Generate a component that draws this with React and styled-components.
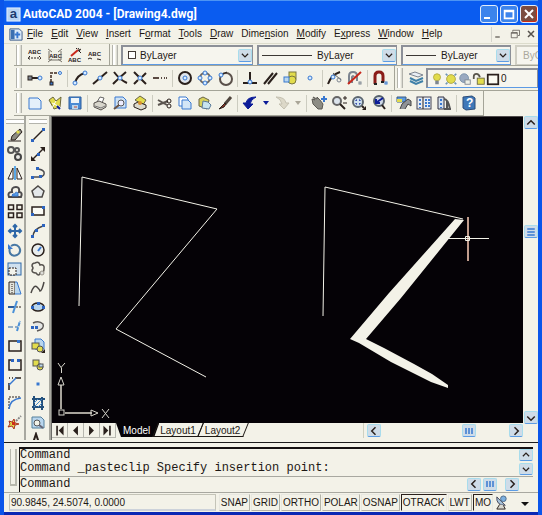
import React, { useState } from "react";
import styled, { createGlobalStyle } from "styled-components";

const GlobalStyle = createGlobalStyle`
  * {
    box-sizing: border-box;
  }
  body {
    margin: 0;
    background: #f3f2e8;
    font-family: "Liberation Sans", Arial, sans-serif;
    font-size: 10px;
    color: #1d1814;
  }
  button, select, input {
    font: inherit;
    color: inherit;
  }
  button {
    padding: 0;
    border: none;
    background: none;
  }
`;

const ink = "#2a201c";
const blue = "#3878d0";
const sky = "#b9d6ee";
const navy = "#0c1c98";
const yellow = "#e2dc4c";
const steel = "#7d8590";

const node = (x, y, r = 1.5) => (
  <circle cx={x} cy={y} r={r} fill="#d8ecff" stroke={blue} />
);
const dot = (x, y) => <rect x={x} y={y} width="3" height="3" fill="#2c64c0" stroke="none" />;

const icons = {
  // text and spelling
  textArrow: (
    <>
      <text x="1" y="7" fontSize="6" fontWeight="bold" stroke="none" fill={ink}>ABC</text>
      <path d="M1 11h13M3 9l-2 2 2 2M12 9l2 2-2 2" strokeDasharray="2 1" />
    </>
  ),
  textCross: (
    <>
      <text x="2" y="11" fontSize="6" fontWeight="bold" stroke="none" fill={ink}>ABC</text>
      <path d="M1 2l4 3M15 2l-4 3M1 15l4-3M15 15l-4-3M2 4v9h12V4" stroke="#77726a" />
    </>
  ),
  textWand: (
    <>
      <path d="M4 9l7-6" stroke="#c8281c" strokeWidth="2" />
      <path d="M11 1l2 3M14 2l-3 2M14 6l-2-2M9 1l1 1" />
      <text x="1" y="15" fontSize="6" fontWeight="bold" stroke="none" fill={ink}>ABC</text>
    </>
  ),
  textArc: (
    <>
      <text x="1" y="9" fontSize="6" fontWeight="bold" stroke="none" fill={ink}>ABC</text>
      <path d="M1 12q2-2 4 0M10 12q2 0 4 1" />
    </>
  ),
  // object snap
  track: (
    <>
      <path d="M2 8h10" strokeWidth="2" />
      <rect x="1" y="6" width="4" height="4" fill={steel} />
      {node(13, 8, 2)}
    </>
  ),
  from: (
    <>
      <path d="M4 12V3h8" strokeDasharray="3 1" strokeWidth="2" stroke="#6a5a50" />
      <rect x="3" y="12" width="3" height="3" fill={blue} stroke={ink} />
      {node(13, 3)}
    </>
  ),
  endpoint: (
    <>
      <path d="M3 13Q5 5 13 3" strokeWidth="2" />
      {node(3, 13, 2)}
      {node(13, 3, 2)}
    </>
  ),
  midpoint: (
    <>
      <path d="M1 14L15 2" strokeWidth="2" />
      {node(8, 8, 2)}
    </>
  ),
  intersection: (
    <>
      <path d="M2 2q6 8 13 11M1 14q5-5 13-12" strokeWidth="2" />
      {node(8, 8, 2)}
    </>
  ),
  apparent: (
    <>
      <path d="M2 2l12 12M14 3L10 7M6 10l-4 4" strokeWidth="2" />
      {node(8, 8, 2)}
    </>
  ),
  extension: <path d="M1 8h6M9 8h1M12 8h1M14 8h1" strokeWidth="2" stroke="#5a4a42" />,
  center: (
    <>
      <circle cx="8" cy="8" r="6" strokeWidth="2" fill="#dfe5ec" />
      {node(8, 8, 2)}
    </>
  ),
  quadrant: (
    <>
      <circle cx="8" cy="8" r="5" strokeWidth="2" stroke="#6a6460" />
      {node(8, 3, 2)}
      {node(8, 13, 2)}
      {node(3, 8, 2)}
      {node(13, 8, 2)}
    </>
  ),
  tangent: (
    <>
      <circle cx="9" cy="9" r="6" strokeWidth="2" stroke="#5a504a" />
      <path d="M2 6l8-4" />
      {node(4, 5, 2)}
    </>
  ),
  perpendicular: (
    <>
      <path d="M8 2v9M1 13h14" strokeWidth="2" />
      {node(8, 12, 2)}
    </>
  ),
  parallel: <path d="M2 14L11 3M6 14L15 3" strokeWidth="2" />,
  insertPoint: (
    <>
      <rect x="7" y="2" width="7" height="7" fill={yellow} stroke="#7a7640" />
      <circle cx="10" cy="10" r="4" fill={yellow} stroke="#7a7640" />
      <rect x="2" y="7" width="5" height="5" fill={sky} stroke={blue} />
    </>
  ),
  nodePoint: node(8, 8, 2),
  nearest: (
    <>
      <path d="M1 14Q4 5 13 2" strokeWidth="2" />
      <path d="M6 3l8 7" stroke="#555" />
      {node(6, 7, 2)}
      <circle cx="12" cy="10" r="2" stroke={steel} />
    </>
  ),
  snapNone: (
    <>
      <path d="M2 14V6q0-4 4-4t4 4v5M5 13V7q1-2 2 0" stroke={steel} strokeWidth="2" />
      <path d="M1 14L14 2" stroke="#c8281c" strokeWidth="2" />
      <rect x="12" y="12" width="2" height="2" stroke={steel} />
    </>
  ),
  snapSettings: (
    <>
      <path d="M3 14V6q0-4 4-4t4 4v6" stroke="#8a1c18" strokeWidth="3" />
      <path d="M2 14h3M9 12h3" stroke="#222" strokeWidth="2" />
      <rect x="13" y="12" width="2" height="2" stroke={blue} />
    </>
  ),
  layers: (
    <>
      <path d="M1 4l6-2 8 3-5 2z" fill="#e8eef4" stroke={steel} />
      <path d="M2 8l6 3 7-3M2 11l6 3 7-3" stroke="#3f80a8" strokeWidth="2" />
    </>
  ),
  bulb: (
    <>
      <circle cx="8" cy="6" r="4" fill={yellow} stroke="#b0a840" />
      <path d="M6 11h4M6 13h4" strokeWidth="2" stroke={steel} />
    </>
  ),
  sun: (
    <>
      <circle cx="8" cy="8" r="5" fill={yellow} stroke="#a8a040" />
      <path d="M2 2l2 2M14 2l-2 2M2 14l2-2M14 14l-2-2" stroke="#6c94b4" strokeWidth="2" />
    </>
  ),
  freeze: (
    <>
      <circle cx="7" cy="7" r="5" fill="#9aa9c0" stroke="#7890a8" />
      <rect x="8" y="9" width="6" height="5" fill="#eef0e8" stroke={steel} />
    </>
  ),
  lock: (
    <>
      <path d="M2 8V5q0-3 3-3t4 4" strokeWidth="2" stroke="#5a564c" />
      <rect x="6" y="7" width="8" height="7" fill={yellow} stroke="#6a6640" />
    </>
  ),
  swatch: <rect x="2" y="3" width="12" height="11" fill="#fbfaf2" strokeWidth="2" />,
  smallSwatch: <rect x="4" y="4" width="8" height="8" fill="#fff" strokeWidth="1" />,
  // standard
  newFile: <path d="M2 3h9l3 3v8H2z" fill="#e4f0fa" stroke={blue} />,
  open: (
    <>
      <path d="M2 5l4-3 3 4 5-4-1 10-6 2z" fill={yellow} stroke="#6a6640" />
      <path d="M5 8l8 4M9 6l-4 7" stroke="#fff" />
      <path d="M10 11l3 3" stroke={navy} strokeWidth="2" />
    </>
  ),
  save: (
    <>
      <path d="M2 2h12v12H2z" fill="#4a8ad4" stroke="#2c5c9c" />
      <path d="M4 3h8v5H4z" fill="#eef4f8" stroke="none" />
      <path d="M5 10h6v4H5z" fill={sky} stroke="none" />
      <path d="M7 12h3" stroke="#c84830" />
    </>
  ),
  print: (
    <>
      <path d="M5 7l3-5 4 1-2 5" fill="#fff" stroke="#666" />
      <path d="M2 8l5-2 7 3v3l-5 3-7-3z" fill="#d8d6cc" stroke="#55504c" />
      <path d="M3 11l6 2 4-2" stroke="#777" />
    </>
  ),
  preview: (
    <>
      <path d="M3 2h8l3 3v8H3z" fill="#cfe2f4" stroke={blue} />
      <circle cx="9" cy="8" r="3" fill="#eef" stroke="#555" />
      <path d="M7 10l-5 4" strokeWidth="2" stroke="#6a5446" />
    </>
  ),
  publish: (
    <>
      <path d="M3 5l5-4 6 4-3 5z" fill={yellow} stroke="#6a6448" />
      <path d="M2 9l4-2 8 3v3l-5 2-7-3z" fill="#dcdacc" />
      <circle cx="8" cy="8" r="2" fill="#d89030" stroke="none" />
    </>
  ),
  cut: (
    <>
      <path d="M1 5l9 5M1 10l10-4" strokeWidth="2" stroke="#5c5650" />
      <circle cx="12" cy="6" r="2" />
      <circle cx="12" cy="11" r="2" />
    </>
  ),
  copyClip: (
    <>
      <path d="M2 2h7l2 2v7H2z" fill="#fff" stroke={blue} />
      <path d="M5 5h6l3 3v6H5z" fill="#d4e6f6" stroke={blue} />
    </>
  ),
  paste: (
    <>
      <path d="M2 4l4-2 6 3-2 9-8-3z" fill="#d8d25c" stroke="#6a6448" />
      <path d="M6 6l5 1 3 3-2 4-7-1z" fill="#c8e4f0" stroke="#5a7a98" />
    </>
  ),
  match: (
    <>
      <path d="M14 2L8 9" strokeWidth="3" stroke="#50463e" />
      <path d="M8 8l-6 6 5-2 2-3z" fill="#8c3424" stroke={ink} />
    </>
  ),
  undo: (
    <path d="M1 8h3q1-6 10-6-5 2-6 7h3l-5 5z" fill={navy} stroke={navy} />
  ),
  redo: (
    <path d="M15 8h-3Q11 2 2 2q5 2 6 7H5l5 5z" fill="#dcd8c8" stroke="#c4c0b0" />
  ),
  caret: <path d="M5 6h6L8 10z" fill={navy} stroke="none" />,
  caretGray: <path d="M5 6h6L8 10z" fill="#aaa698" stroke="none" />,
  pan: (
    <>
      <path d="M1 4l3 1-2-3 4 2V2l3 3 3 4-1 5H7L2 9z" fill="#8c8c84" stroke="#5c5a54" />
      <path d="M13 1v6M10 4h6" stroke={blue} strokeWidth="2" />
    </>
  ),
  zoomLive: (
    <>
      <circle cx="6" cy="6" r="4" fill="#dce4ec" stroke="#666" strokeWidth="2" />
      <path d="M9 9l5 5" strokeWidth="2" />
      <path d="M12 3h4M14 1v4M12 8h4" />
    </>
  ),
  zoomWindow: (
    <>
      <circle cx="7" cy="7" r="5" fill="#cfe2f0" stroke="#5c6670" strokeWidth="2" />
      <path d="M5 6V5h1M8 5h1v1M9 8v1H8M6 9H5V8" stroke={navy} />
      <path d="M11 11l2 2" strokeWidth="2" />
      <path d="M15 11v4h-4z" fill={ink} stroke="none" />
    </>
  ),
  zoomPrev: (
    <>
      <circle cx="8" cy="6" r="5" fill="#cfd8e6" stroke="#55606c" strokeWidth="2" />
      <path d="M12 3L6 7M5 4v4h4" stroke={navy} strokeWidth="2" />
      <path d="M11 10l3 4" strokeWidth="2" />
    </>
  ),
  properties: (
    <>
      <path d="M1 2h9v5H1z" fill="#5a9ae0" stroke="#3a5a80" />
      <path d="M1 4h5v3H1z" fill={yellow} stroke="none" />
      <path d="M4 14l2-5 6-5 3 2v5l-3-2-3 5" fill="#8f9296" stroke="#444" />
    </>
  ),
  designCenter: (
    <>
      <rect x="1" y="2" width="14" height="12" fill="#e6ecf4" stroke="#445" />
      <path d="M7 2v12" />
      <path d="M4 4v2M4 8v2M4 12v1M9 5h2M12 5h2M9 8h2M12 8h2M9 11h2M12 11h2" stroke={blue} strokeWidth="2" />
    </>
  ),
  toolPalettes: (
    <>
      <path d="M2 2h6v12H2z" fill="#d4e0ee" stroke="#334" />
      <path d="M5 4v2M5 8v2M5 12v1" stroke={blue} strokeWidth="2" />
      <path d="M8 4q4 0 6 10M11 6v8M8 14h7" stroke="#555" strokeWidth="2" />
    </>
  ),
  help: (
    <>
      <path d="M2 2l9-1 3 2v11l-9 1-3-2z" fill="#3f78b8" stroke="#2c4c78" />
      <text x="5" y="12" fontSize="12" fontWeight="bold" fill="#fff" stroke="none">?</text>
    </>
  ),
  // modify
  erase: (
    <>
      <path d="M13 2l2 3-7 8H4l1-4z" fill="#8c8a80" />
      <path d="M12 4l-2 2" stroke={yellow} strokeWidth="3" />
      <path d="M1 14h13" />
    </>
  ),
  copy: (
    <>
      <circle cx="4" cy="4" r="3" strokeWidth="2" stroke="#555" />
      <circle cx="10" cy="4" r="2" strokeWidth="2" stroke="#555" />
      <circle cx="11" cy="11" r="3" strokeWidth="2" stroke="#444" fill="#e8e8e4" />
    </>
  ),
  mirror: (
    <>
      <path d="M6 3v11H1zM10 3v11h5z" fill="#fff" />
      <path d="M8 1v14" stroke="#5aa8e8" strokeWidth="2" />
    </>
  ),
  offset: (
    <>
      <path d="M2 13q-2-5 3-5-1-5 4-5 4 0 3 5 4 0 2 5z" stroke="#4c4a4c" strokeWidth="2" />
      <path d="M5 12q0-3 3-2 0-3 3-1v3z" fill="#5aa0e8" stroke={blue} />
    </>
  ),
  array: (
    <g strokeWidth="1.5">
      <rect x="1.500" y="2" width="5" height="4.500" />
      <rect x="10" y="2" width="5" height="4.500" />
      <rect x="1.500" y="10" width="5" height="4.500" />
      <rect x="10" y="10" width="5" height="4.500" />
    </g>
  ),
  move: (
    <path
      d="M8 2v12M2 8h12M6 4l2-2 2 2M6 12l2 2 2-2M4 6L2 8l2 2M12 6l2 2-2 2"
      stroke="#2f68a8"
      strokeWidth="2"
    />
  ),
  rotate: (
    <>
      <path d="M4 4q5-3 8 1 3 5-2 8-5 2-7-2-1-3 0-5" stroke="#4878a4" strokeWidth="2" />
      <path d="M1 2v5h5z" fill={blue} stroke="none" />
    </>
  ),
  scale: (
    <>
      <rect x="1" y="2" width="13" height="12" fill="#cfe0ee" stroke="#2f68a8" />
      <path d="M2 7h7v7H2z" fill="#f4f4ec" strokeDasharray="2 1" />
    </>
  ),
  stretch: (
    <>
      <path d="M2 2h6v12H2z" fill="#e4e4dc" />
      <path d="M8 2h2l4 12H8" fill={sky} stroke={blue} />
      <path d="M5 4v9" strokeDasharray="1 1" />
    </>
  ),
  trim: (
    <>
      <path d="M1 8h7" strokeWidth="2" stroke="#2c5c9c" />
      <path d="M9 8h6" strokeDasharray="2 1" />
      <path d="M6 14L10 2" stroke="#4a90d8" strokeWidth="2" />
    </>
  ),
  extend: (
    <>
      <path d="M1 9h5M8 9h3" stroke="#2f68a8" />
      <path d="M10 13l3-10" stroke="#4a90d8" strokeDasharray="4 1" strokeWidth="2" />
    </>
  ),
  breakPoint: (
    <>
      <path d="M2 3v10h12V3H2z" strokeWidth="1.5" />
      <rect x="10" y="2" width="3" height="3" fill={blue} stroke="none" />
    </>
  ),
  breakGap: (
    <>
      <path d="M4 3H2v10h12V3h-2" strokeWidth="1.5" />
      {dot(4, 2)}
      {dot(10, 2)}
    </>
  ),
  chamfer: (
    <>
      <path d="M2 14V7M2 2h1M5 2h1M8 2h6" strokeWidth="1.5" />
      <path d="M2 9l7-7" stroke={blue} strokeWidth="1.5" />
    </>
  ),
  fillet: (
    <>
      <path d="M2 14V2h12" strokeDasharray="2 1" />
      <path d="M2 14Q3 4 14 3" stroke={blue} strokeWidth="1.5" />
    </>
  ),
  explode: (
    <>
      <path d="M2 7l3 1 2-3 1 4 4 1-4 1-1 4-2-3-4 1 2-3z" fill={yellow} stroke="#a83020" />
      <path d="M9 7l5-5" stroke="#888" strokeWidth="2" strokeDasharray="2 1" />
      <rect x="5" y="8" width="3" height="3" fill="#d02c18" stroke="none" />
    </>
  ),
  // draw
  line: (
    <>
      <path d="M3 13L13 3" strokeWidth="1.5" />
      {dot(1, 12)}
      {dot(12, 1)}
    </>
  ),
  xline: (
    <>
      <path d="M2 14L14 2" strokeWidth="1.5" />
      <path d="M1 15v-5l5 5zM15 1v5l-5-5z" fill={ink} stroke="none" />
      {dot(7, 7)}
    </>
  ),
  pline: (
    <>
      <path d="M3 12h7q5-1 4-5-2-3-7-3" strokeWidth="1.5" stroke="#4c4c50" />
      {dot(1, 11)}
      {dot(6, 2)}
      {dot(9, 10)}
    </>
  ),
  polygon: <path d="M8 2l6 5-2 6H4L2 7z" fill="#e4e8ea" strokeWidth="1.5" stroke="#4c4846" />,
  rectangle: (
    <>
      <rect x="2" y="4" width="12" height="8" fill="#fafaf4" strokeWidth="1.5" />
      {dot(1, 10)}
      {dot(12, 3)}
    </>
  ),
  arc: (
    <>
      <path d="M3 14Q3 6 13 3" strokeWidth="1.5" stroke="#444" />
      {dot(1, 12)}
      {dot(5, 6)}
      {dot(12, 1)}
    </>
  ),
  circle: (
    <>
      <circle cx="8" cy="8" r="6" fill="#e8ecec" strokeWidth="1.5" />
      <path d="M8 9l3-4" stroke={blue} strokeWidth="2" />
    </>
  ),
  cloud: (
    <>
      <path
        d="M5 2q4-2 5 2 5-1 4 4 0 5-4 4-1 4-4 0-4 0-4-3 2-2 0-4 0-3 3-3z"
        fill="#f3f2e8"
        strokeWidth="1.5"
        stroke="#56524e"
      />
      <circle cx="12" cy="12" r="2" fill="#dcdcd8" stroke="#99958c" />
    </>
  ),
  spline: <path d="M1 13q3-9 6-6t3 4q2 0 4-9" strokeWidth="1.5" stroke="#4a4644" />,
  ellipse: (
    <>
      <ellipse cx="8" cy="8" rx="6" ry="4" fill={sky} strokeWidth="1.5" />
      {dot(1, 7)}
      {dot(12, 7)}
      {dot(7, 3)}
    </>
  ),
  ellipseArc: (
    <>
      <path d="M3 5q6-3 10 1 2 5-6 7" fill="#e4e6e4" strokeWidth="1.5" stroke="#5c5856" />
      {dot(1, 8)}
      {dot(5, 8)}
    </>
  ),
  insertBlock: (
    <>
      <path d="M5 1h6l3 3v7H5z" fill={sky} stroke={blue} />
      <rect x="2" y="5" width="7" height="6" fill={yellow} stroke="#555" />
      <circle cx="10" cy="11" r="3" fill={yellow} stroke="#555" />
      <path d="M15 11v4h-4z" fill={ink} stroke="none" />
    </>
  ),
  makeBlock: (
    <>
      <rect x="3" y="3" width="6" height="6" fill={yellow} stroke="#555" />
      <circle cx="10" cy="10" r="3" fill={yellow} stroke="#555" />
      <rect x="9" y="7" width="4" height="3" fill={sky} stroke="#555" />
    </>
  ),
  point: <rect x="7" y="7" width="2" height="2" fill={blue} stroke={blue} />,
  hatch: (
    <>
      <path d="M2 4h13M2 12h12M4 1v14M12 2v13" stroke="#23507c" strokeWidth="2" />
      <path d="M4 8l4-4M4 12l8-8M8 12l4-4" stroke="#4a8ac8" />
    </>
  ),
  region: (
    <>
      <path d="M2 3h9l3 3v8H2z" fill={sky} stroke="#55809c" />
      <circle cx="7" cy="9" r="3" fill="#f3f2e8" stroke="#555" />
      <path d="M9 11l4 3" strokeWidth="2" stroke="#667" />
    </>
  ),
  mtext: <path d="M4 14L8 2l4 12M5 10h6" strokeWidth="2" />,
  // chrome
  app: (
    <>
      <rect x="1" y="1" width="14" height="14" fill="#b8d4f4" stroke="#e8f2ff" />
      <text x="4" y="12" fontSize="14" fontWeight="bold" fill="#1c3c70" stroke="none">a</text>
    </>
  ),
  drawing: (
    <>
      <path d="M2 2h10l3 3v9H2z" fill="#dcebf8" stroke="#3a5a88" />
      <path d="M3 3h4v10H3z" fill="#3c70b0" stroke="none" />
      <path d="M10 5v7M7 8h6" stroke={blue} strokeWidth="2" />
    </>
  ),
  dish: (
    <>
      <path d="M3 2q-1 9 9 9z" fill="#a8c4dc" stroke="#445" />
      <circle cx="10" cy="4" r="3" fill="#7cb0e0" stroke="#4a6888" />
      <path d="M6 10l-3 5h9l-2-4" fill="#d8d8d0" />
    </>
  ),
  minimize: <path d="M3 12h6" strokeWidth="2" />,
  restore: <path d="M5 5V3h9v7h-2M3 6h8v7H3zM3 7h8" />,
  maximize: <path d="M3 4h10v9H3zM3 5h10" strokeWidth="2" />,
  close: <path d="M4 4l8 8M12 4l-8 8" strokeWidth="2" />,
  left: <path d="M10 3L5 8l5 5" strokeWidth="2" />,
  right: <path d="M6 3l5 5-5 5" strokeWidth="2" />,
  up: <path d="M3 10l5-5 5 5" strokeWidth="2" />,
  down: <path d="M3 6l5 5 5-5" strokeWidth="2" />,
  first: <path d="M4 2v12h2V2zM13 2v12L7 8z" fill={ink} stroke="none" />,
  prev: <path d="M11 2v12L5 8z" fill={ink} stroke="none" />,
  next: <path d="M5 2v12l6-6z" fill={ink} stroke="none" />,
  last: <path d="M3 2v12l6-6zM10 2v12h2V2z" fill={ink} stroke="none" />,
  menuDown: <path d="M4 7h8l-4 4z" fill="#111" stroke="none" />,
  thumbH: <path d="M4 4v8M8 4v8M12 4v8" stroke={blue} strokeWidth="2" />,
  thumbV: <path d="M3 4h10M3 8h10M3 12h10" stroke={blue} strokeWidth="2" />,
};

const Svg = styled.svg`
  display: block;
  flex: none;
  overflow: visible;
`;

const Icon = ({ name, size = 16, color = ink }) => (
  <Svg width={size} height={size} viewBox="0 0 16 16" fill="none" stroke={color} aria-hidden="true">
    {icons[name]}
  </Svg>
);

const Window = styled.div`
  display: flex;
  flex-direction: column;
  width: 100%;
  min-height: 100vh;
  overflow: hidden;
  background: #f3f2e8;
  border: solid #0a55ea;
  border-width: 0 4px 0 4px;
`;

const TitleBar = styled.header`
  display: flex;
  align-items: center;
  gap: 2px;
  height: 25px;
  margin: 0 -4px;
  padding: 2px 4px 0 6px;
  background: #0a5cf0;
  border-top: 1px solid #4c94f4;
  border-radius: 4px 4px 0 0;
  h1 {
    flex: 1;
    margin: 0;
    font-family: Roboto, "Liberation Sans", sans-serif;
    font-size: 12px;
    line-height: 18px;
    color: #fff;
    white-space: nowrap;
  }
`;

const CaptionButton = styled.button`
  display: flex;
  align-items: center;
  justify-content: center;
  width: 18px;
  height: 18px;
  border: 1px solid #e4eefc;
  border-radius: 3px;
  background: ${(props) => (props.$close ? "#7c4c40" : "#3c84ec")};
  box-shadow: ${(props) => (props.$close ? "inset -1px -1px #cc2c14" : "none")};
`;

const MenuBar = styled.nav`
  display: flex;
  align-items: center;
  height: 19px;
  padding-left: 4px;
  border-bottom: 1px solid #dcdccc;
`;

const MenuItem = styled.button`
  padding: 0 4px;
  line-height: 16px;
  white-space: nowrap;
  u {
    text-underline-offset: 1px;
  }
`;

const MdiButtons = styled.div`
  display: flex;
  gap: 2px;
  margin-left: auto;
  border-left: 1px solid #d4d4cc;
`;

const MdiButton = styled.button`
  display: flex;
  align-items: center;
  justify-content: center;
  width: 14px;
  height: 15px;
`;

const ToolRow = styled.div`
  display: flex;
  overflow: hidden;
  height: ${(props) => (props.$short ? 22 : 25)}px;
  padding-left: 10px;
`;

const Toolbar = styled.div`
  display: flex;
  align-items: center;
  flex: ${(props) => (props.$grow ? "1 0 auto" : "none")};
  padding-right: ${(props) => (props.$grow ? 0 : 4)}px;
  border: solid #a4a498;
  border-width: 0 ${(props) => (props.$grow ? 0 : 1)}px 1px 0;
`;

const Grip = styled.div`
  flex: none;
  width: 6px;
  height: 20px;
  margin: 0 3px 0 2px;
  border: solid #b4b4ac;
  border-width: 0 1px;
  box-shadow: inset 2px 0 #fff, inset -1px 0 #dcdcd4;
`;

const ToolButton = styled.button`
  display: flex;
  align-items: center;
  justify-content: center;
  flex: none;
  width: ${(props) => (props.$narrow ? 12 : 20)}px;
  height: 20px;
`;

const Separator = styled.div`
  flex: none;
  width: 1px;
  height: 17px;
  margin: 0 2px;
  background: #ccccc0;
`;

const Combo = styled.label`
  display: flex;
  align-items: center;
  flex: ${(props) => (props.$width ? "none" : "1 0 112px")};
  width: ${(props) => props.$width || 112}px;
  height: 20px;
  padding-left: 2px;
  margin-right: ${(props) => (props.$width ? 4 : 0)}px;
  background: #f6f5ee;
  border: solid #8c9098;
  border-width: 2px 1px 1px 2px;
  border-color: ${(props) => (props.$disabled ? "#d0cfc4" : "#8c9098")};
  border-bottom-color: ${(props) => (props.$disabled ? "#d0cfc4" : "#5c9ae4")};
  color: ${(props) => (props.$disabled ? "#aaa89c" : "inherit")};
  select {
    flex: 1;
    min-width: 0;
    height: 16px;
    padding: 0 0 0 ${(props) => (props.$disabled ? 4 : 1)}px;
    border: none;
    outline: none;
    background: none;
    appearance: none;
    opacity: 1;
  }
`;

const LineSample = styled.span`
  flex: none;
  width: ${(props) => props.$length}px;
  height: 1px;
  margin: 0 4px 0 1px;
  background: #3c3834;
`;

const ScrollButton = styled.button`
  display: flex;
  align-items: center;
  justify-content: center;
  flex: none;
  width: 14px;
  height: 13px;
  border: 1px solid #a8dcec;
  border-bottom-color: #5c9ce4;
  border-radius: 2px;
  background: #cfdce8;
`;

const Workspace = styled.main`
  display: flex;
  flex: 1;
  min-height: 240px;
  padding-left: 1px;
`;

const SideToolbar = styled.div`
  display: flex;
  flex-direction: column;
  align-items: center;
  width: ${(props) => props.$width}px;
  padding-top: 3px;
  overflow: hidden;
  border-right: 2px solid #a8a8a0;
`;

const SideGrip = styled.div`
  flex: none;
  width: 18px;
  height: 5px;
  margin-bottom: 1px;
  border: solid #b4b4ac;
  border-width: 1px 0;
  background: #fff;
`;

const SideButtons = styled.div`
  display: flex;
  flex-direction: column;
  flex: 1;
  button {
    flex: 1;
    min-height: 0;
  }
`;

const Cutoff = styled.div`
  height: 8px;
  overflow: hidden;
`;

const Document = styled.section`
  display: flex;
  flex-direction: column;
  flex: 1;
  min-width: 0;
  border-left: 1px solid #6c6c68;
`;

const Drawing = styled.svg`
  display: block;
  flex: 1;
  width: 100%;
  min-height: 0;
  background: #050206;
  border-top: 1px solid #504c4c;
`;

const DocumentFooter = styled.div`
  display: flex;
  align-items: flex-start;
  height: 17px;
`;

const SheetNav = styled.div`
  display: flex;
  button {
    display: flex;
    align-items: center;
    justify-content: center;
    width: 16px;
    height: 15px;
    border: solid #b8b8b0;
    border-width: 0 1px 1px 0;
  }
`;

const Tabs = styled.div`
  display: flex;
  margin-left: 2px;
`;

const Tab = styled.button`
  position: relative;
  z-index: 0;
  height: 14px;
  padding: 0 3px;
  line-height: 13px;
  color: ${(props) => (props.$active ? "#fff" : "inherit")};
  &::before {
    content: "";
    position: absolute;
    z-index: -1;
    ${(props) =>
      props.$active
        ? `
      inset: 0 -5px 0 -2px;
      background: #050206;
      clip-path: polygon(0 0, 100% 0, calc(100% - 5px) 100%, 5px 100%);
    `
        : `
      inset: 0 -2px;
      border: solid #1d1814;
      border-width: 0 1px 1px 1px;
      transform: skewX(-22deg);
    `}
  }
  &:first-child {
    padding: 0 4px 0 5px;
  }
  & + & {
    margin-left: 3px;
  }
`;

const ScrollX = styled.div`
  display: flex;
  align-items: center;
  justify-content: space-between;
  width: 160px;
  height: 15px;
  margin-left: auto;
  padding-left: 3px;
  border-left: 1px solid #d0d0c0;
`;

const ScrollY = styled.div`
  display: flex;
  flex-direction: column;
  align-items: center;
  width: 15px;
  padding-bottom: 16px;
`;

const Spacer = styled.div`
  flex: ${(props) => props.$grow || 1};
`;

const CommandPanel = styled.section`
  display: flex;
  height: 50px;
  padding: 4px 5px 0 6px;
  margin-top: 2px;
  border-top: 1px solid #1c1c1c;
`;

const CommandGrip = styled.div`
  width: 7px;
  margin: 2px 2px 6px 0;
  border: solid #b8b8ac;
  border-width: 0 2px 2px 1px;
`;

const Console = styled.div`
  display: flex;
  flex-direction: column;
  flex: 1;
  min-width: 0;
  border: solid #141010;
  border-width: 2px 0 0 1px;
  font-family: "Liberation Mono", monospace;
  font-size: 12px;
`;

const History = styled.div`
  display: flex;
  height: 28px;
  border-bottom: 1px solid #a8a8a0;
`;

const Log = styled.div`
  display: flex;
  flex-direction: column;
  flex: 1;
  line-height: 13px;
  white-space: pre;
`;

const LogScroll = styled.div`
  display: flex;
  flex-direction: column;
  justify-content: space-between;
  padding-bottom: 1px;
  button {
    height: 12px;
  }
`;

const Prompt = styled.label`
  display: flex;
  align-items: center;
  gap: 2px;
  height: 14px;
  padding-right: 14px;
  input {
    flex: 1;
    min-width: 0;
    height: 14px;
    padding: 0 6px;
    border: none;
    outline: none;
    background: none;
  }
`;

const StatusBar = styled.footer`
  display: flex;
  align-items: center;
  gap: 1px;
  height: 23px;
  margin: 0 -4px;
  padding: 1px 0 0 5px;
  overflow: hidden;
  background: #f3f2e8;
  border: solid #0a55ea;
  border-width: 0 4px 3px;
  border-bottom-color: #0a28b4;
  box-shadow: inset 0 1px #a8a8a0;
`;

const Coordinates = styled.output`
  flex: 1;
  height: 17px;
  margin-right: 2px;
  padding-left: 1px;
  line-height: 15px;
  white-space: nowrap;
  border: 1px solid #c4c4b8;
  border-bottom: 2px solid #ccd2da;
`;

const Toggle = styled.button`
  flex: none;
  height: 17px;
  padding: 0 1px;
  line-height: 15px;
  border: 1px solid;
  border-color: ${(props) =>
    props.$on ? "#2a201c #e8e8e0 #e8e8e0 #2a201c" : "#e8e8e0 #b4b4a8 #b4b4a8 #e8e8e0"};
`;

const StatusTray = styled.div`
  display: flex;
  align-items: center;
  gap: 6px;
  width: 44px;
`;

const menus = [
  ["", "F", "ile"],
  ["", "E", "dit"],
  ["", "V", "iew"],
  ["", "I", "nsert"],
  ["F", "o", "rmat"],
  ["", "T", "ools"],
  ["", "D", "raw"],
  ["Dime", "n", "sion"],
  ["", "M", "odify"],
  ["E", "x", "press"],
  ["", "W", "indow"],
  ["", "H", "elp"],
];

const textTools = ["textArrow", "textCross", "textWand", "textArc"];

const snapTools = [
  "track", "from", "|",
  "endpoint", "midpoint", "intersection", "apparent", "extension", "|",
  "center", "quadrant", "tangent", "|",
  "perpendicular", "parallel", "insertPoint", "nodePoint", "|",
  "nearest", "snapNone", "|",
  "snapSettings",
];

const standardTools = [
  "newFile", "open", "save", "|",
  "print", "preview", "publish", "|",
  "cut", "copyClip", "paste", "match", "|",
  "undo", "caret", "redo", "caretGray", "|",
  "pan", "zoomLive", "zoomWindow", "zoomPrev", "|",
  "properties", "designCenter", "toolPalettes", "|",
  "help",
];

const modifyTools = [
  "erase", "copy", "mirror", "offset", "array", "move", "rotate", "scale",
  "stretch", "trim", "extend", "breakPoint", "breakGap", "chamfer", "fillet", "explode",
];

const drawTools = [
  "line", "xline", "pline", "polygon", "rectangle", "arc", "circle", "cloud",
  "spline", "ellipse", "ellipseArc", "insertBlock", "makeBlock", "point", "hatch", "region",
];

const Tools = ({ names }) =>
  names.map((name, index) =>
    name === "|" ? (
      <Separator key={index} />
    ) : (
      <ToolButton key={index} aria-label={name} $narrow={name.startsWith("caret")}>
        <Icon name={name} />
      </ToolButton>
    )
  );

const PropertyCombo = ({ label, width, disabled, value = "ByLayer", children }) => (
  <Combo $width={width} $disabled={disabled}>
    {children}
    <select aria-label={label} disabled={disabled}>
      <option>{value}</option>
    </select>
    {width && (
      <ScrollButton as="span">
        <Icon name="down" size={10} />
      </ScrollButton>
    )}
  </Combo>
);

function Canvas() {
  return (
    <Drawing role="img" aria-label="Drawing4.dwg" fill="none" stroke="#f3f2e8">
      <path d="M27 189L30 60L165 92L64 212L154 260" />
      <path d="M271 199L273 70L411 102" />
      <path
        d="M403 102L412 103L349 181L314 222L332 231L362 247L380 257L396 268V271L379 265L339 245L307 226L298 222L337 176Z"
        fill="#f3f2e8"
        stroke="none"
      />
      <path d="M416 100V144" stroke="#c09c8c" strokeWidth="2" />
      <path d="M395 121.5H437M413.500 119.500h4v4h-4z" />
      <g stroke="#d8d6cc">
        <rect x="7" y="293" width="5" height="5" />
        <path d="M9 292V268M13 296H40" strokeWidth="2" stroke="#a8a49c" />
        <path d="M6 268L9 260L12 268ZM39 293L46 296L39 299Z" />
        <path d="M6 246L9 250.500L13 246M9.500 250.500V256M50 292L57 301M57 292L50 301" />
      </g>
    </Drawing>
  );
}

export default function App() {
  const [sheet, setSheet] = useState("Model");
  const [modes, setModes] = useState({ OTRACK: true, MODEL: true });
  const toggle = (mode) => setModes({ ...modes, [mode]: !modes[mode] });

  return (
    <Window>
      <GlobalStyle />
      <TitleBar>
        <Icon name="app" size={15} />
        <h1>AutoCAD 2004 - [Drawing4.dwg]</h1>
        <CaptionButton aria-label="Minimize">
          <Icon name="minimize" color="#fff" />
        </CaptionButton>
        <CaptionButton aria-label="Maximize">
          <Icon name="maximize" size={14} color="#fff" />
        </CaptionButton>
        <CaptionButton aria-label="Close" $close>
          <Icon name="close" color="#fff" />
        </CaptionButton>
      </TitleBar>
      <MenuBar>
        <Icon name="drawing" size={15} />
        {menus.map(([before, key, after]) => (
          <MenuItem key={before + key + after}>
            {before}
            <u>{key}</u>
            {after}
          </MenuItem>
        ))}
        <MdiButtons>
          <MdiButton aria-label="Minimize drawing">
            <Icon name="minimize" size={12} color="#77736c" />
          </MdiButton>
          <MdiButton aria-label="Restore drawing">
            <Icon name="restore" size={12} color="#55514c" />
          </MdiButton>
          <MdiButton aria-label="Close drawing">
            <Icon name="close" size={12} color="#55514c" />
          </MdiButton>
        </MdiButtons>
      </MenuBar>
      <ToolRow $short>
        <Toolbar>
          <Grip />
          <Tools names={textTools} />
        </Toolbar>
        <Toolbar $grow>
          <Grip />
          <PropertyCombo label="Color" width={132}>
            <Icon name="smallSwatch" size={14} />
          </PropertyCombo>
          <PropertyCombo label="Linetype" width={140}>
            <LineSample $length={50} />
          </PropertyCombo>
          <PropertyCombo label="Lineweight" width={110}>
            <LineSample $length={30} />
          </PropertyCombo>
          <PropertyCombo label="Plot style" value="ByColor" disabled />
        </Toolbar>
      </ToolRow>
      <ToolRow>
        <Toolbar>
          <Grip />
          <Tools names={snapTools} />
        </Toolbar>
        <Toolbar $grow>
          <Grip />
          <Tools names={["layers"]} />
          <PropertyCombo label="Layer" value="0">
            <Icon name="bulb" size={14} />
            <Icon name="sun" size={14} />
            <Icon name="freeze" size={14} />
            <Icon name="lock" size={14} />
            <Icon name="swatch" size={14} />
          </PropertyCombo>
        </Toolbar>
      </ToolRow>
      <ToolRow>
        <Toolbar>
          <Grip />
          <Tools names={standardTools} />
        </Toolbar>
      </ToolRow>
      <Workspace>
        <SideToolbar $width={21}>
          <SideGrip />
          <SideButtons>
            <Tools names={modifyTools} />
            <Cutoff />
          </SideButtons>
        </SideToolbar>
        <SideToolbar $width={25}>
          <SideGrip />
          <SideButtons>
            <Tools names={drawTools} />
            <Cutoff>
              <Icon name="mtext" />
            </Cutoff>
          </SideButtons>
        </SideToolbar>
        <Document>
          <Canvas />
          <DocumentFooter>
            <SheetNav>
              {["first", "prev", "next", "last"].map((name) => (
                <button key={name} aria-label={name + " sheet"}>
                  <Icon name={name} size={13} />
                </button>
              ))}
            </SheetNav>
            <Tabs>
              {["Model", "Layout1", "Layout2"].map((name) => (
                <Tab key={name} $active={name === sheet} onClick={() => setSheet(name)}>
                  {name}
                </Tab>
              ))}
            </Tabs>
            <ScrollX>
              <ScrollButton aria-label="Scroll left">
                <Icon name="left" size={12} />
              </ScrollButton>
              <Spacer $grow={5} />
              <ScrollButton as="span">
                <Icon name="thumbH" size={12} />
              </ScrollButton>
              <Spacer $grow={2} />
              <ScrollButton aria-label="Scroll right">
                <Icon name="right" size={12} />
              </ScrollButton>
            </ScrollX>
          </DocumentFooter>
        </Document>
        <ScrollY>
          <ScrollButton aria-label="Scroll up">
            <Icon name="up" size={12} />
          </ScrollButton>
          <Spacer $grow={5} />
          <ScrollButton as="span">
            <Icon name="thumbV" size={12} />
          </ScrollButton>
          <Spacer $grow={9} />
          <ScrollButton aria-label="Scroll down">
            <Icon name="down" size={12} />
          </ScrollButton>
        </ScrollY>
      </Workspace>
      <CommandPanel>
        <CommandGrip />
        <Console>
          <History>
            <Log>
              <div>Command</div>
              <div>Command _pasteclip Specify insertion point:</div>
            </Log>
            <LogScroll>
              <ScrollButton aria-label="Earlier commands">
                <Icon name="up" size={10} />
              </ScrollButton>
              <ScrollButton aria-label="Later commands">
                <Icon name="down" size={10} />
              </ScrollButton>
            </LogScroll>
          </History>
          <Prompt>
            Command
            <input type="text" />
            <ScrollButton aria-label="Scroll left">
              <Icon name="left" size={12} />
            </ScrollButton>
            <ScrollButton as="span">
              <Icon name="thumbH" size={12} />
            </ScrollButton>
            <Spacer as="span" $grow="0 0 4px" />
            <ScrollButton aria-label="Scroll right">
              <Icon name="right" size={12} />
            </ScrollButton>
          </Prompt>
        </Console>
      </CommandPanel>
      <StatusBar>
        <Coordinates>90.9845, 24.5074, 0.0000</Coordinates>
        {["SNAP", "GRID", "ORTHO", "POLAR", "OSNAP", "OTRACK", "LWT"].map((mode) => (
          <Toggle key={mode} $on={modes[mode]} aria-pressed={!!modes[mode]} onClick={() => toggle(mode)}>
            {mode}
          </Toggle>
        ))}
        <Toggle $on={modes.MODEL} aria-pressed={modes.MODEL} onClick={() => toggle("MODEL")}>
          MO
        </Toggle>
        <StatusTray>
          <Icon name="dish" size={15} />
          <ToolButton aria-label="Status bar menu">
            <Icon name="menuDown" />
          </ToolButton>
        </StatusTray>
      </StatusBar>
    </Window>
  );
}
